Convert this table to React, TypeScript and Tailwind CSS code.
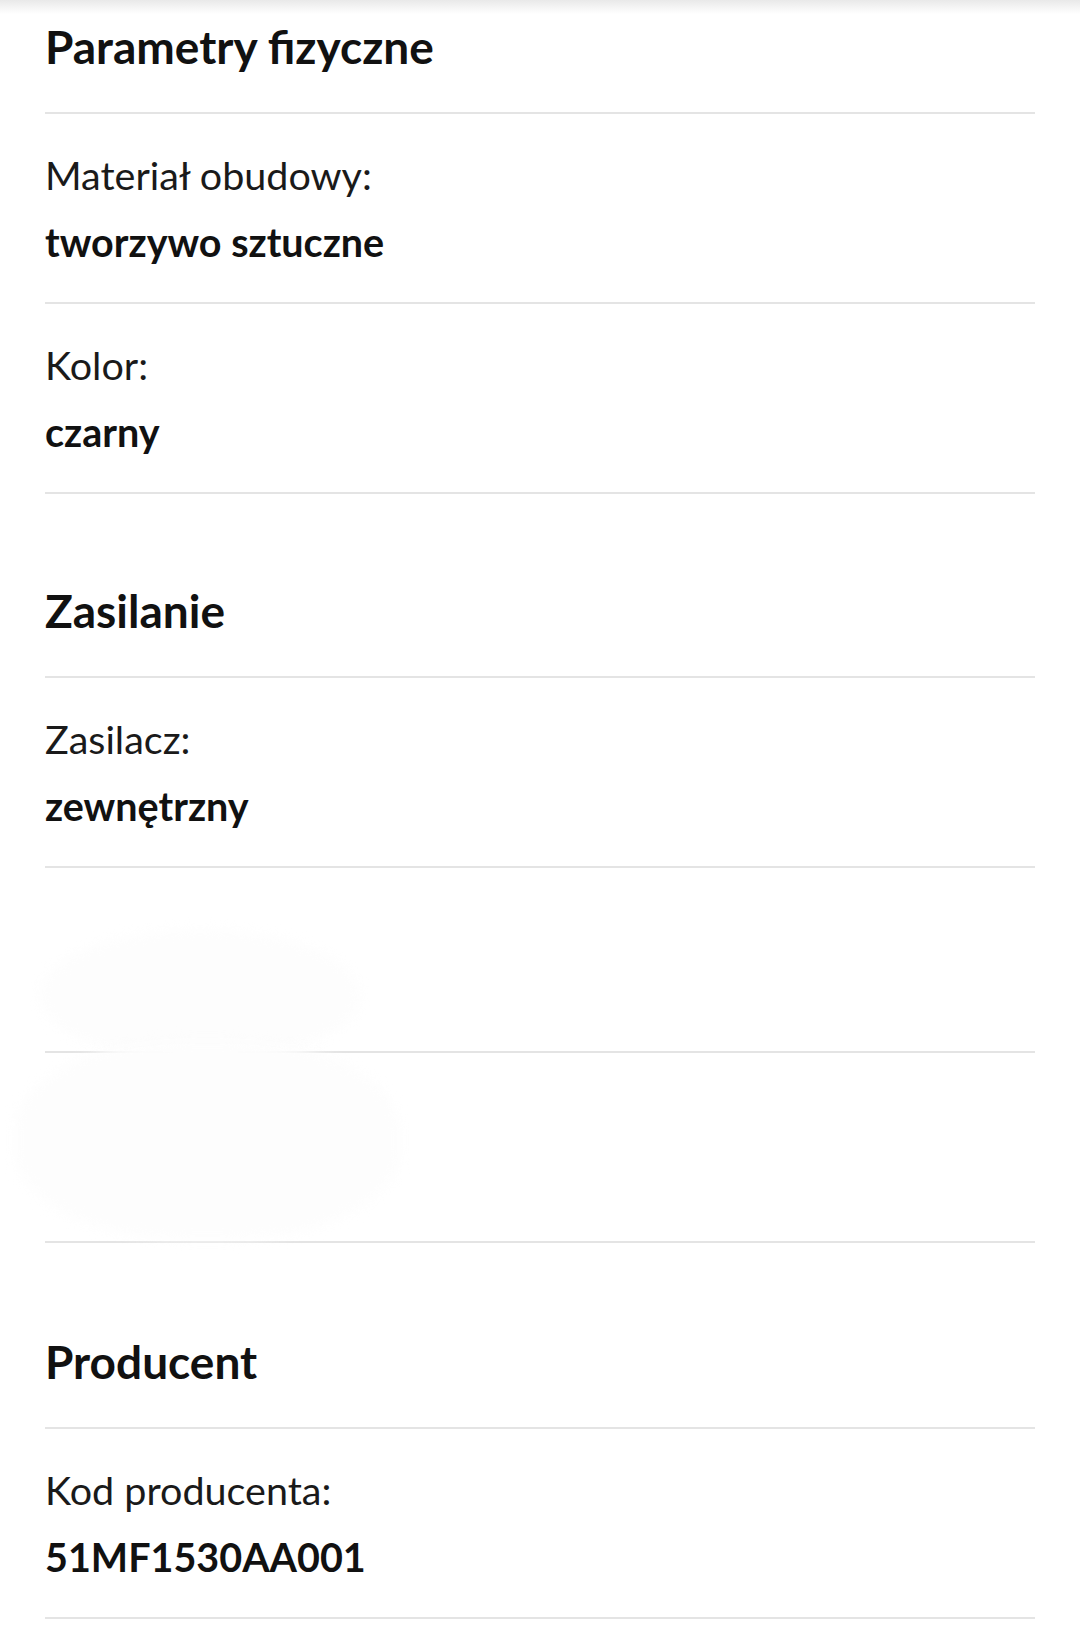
import React from "react";

interface Param {
  label: string;
  value: string;
}

function SectionTitle({ title, first }: { title: string; first?: boolean }) {
  return (
    <div
      className={`${first ? "pt-[20px]" : "pt-[90px]"} pb-[39px] border-b-2 border-[#e4e4e4]`}
    >
      <h2 className="text-[46px] leading-[53px] font-bold text-[#111]">{title}</h2>
    </div>
  );
}

function ParamRow({ label, value }: Param) {
  return (
    <div className="py-[27px] border-b-2 border-[#e4e4e4]">
      <div className="text-[39.5px] leading-[67px] text-[#1a1a1a]">{label}</div>
      <div className="text-[39.5px] leading-[67px] font-bold text-[#111]">{value}</div>
    </div>
  );
}

function App() {
  return (
    <div
      className="relative w-full min-h-screen bg-white overflow-hidden"
      style={{ fontFamily: "Lato, 'Noto Sans', sans-serif" }}
    >
      <div className="absolute top-0 left-0 right-0 h-[14px] bg-linear-to-b from-[#e9e9e9] to-white" />
      <div className="relative px-[45px]">
        <SectionTitle title="Parametry fizyczne" first />
        <ParamRow label="Materiał obudowy:" value="tworzywo sztuczne" />
        <ParamRow label="Kolor:" value="czarny" />

        <SectionTitle title="Zasilanie" />
        <ParamRow label="Zasilacz:" value="zewnętrzny" />

        {/* hidden rows */}
        <div className="h-[185px] border-b-2 border-[#e4e4e4]" />
        <div className="h-[190px] border-b-2 border-[#e4e4e4]" />

        <div className="pt-[92px] pb-[39px] border-b-2 border-[#e4e4e4]">
          <h2 className="text-[46px] leading-[53px] font-bold text-[#111]">Producent</h2>
        </div>
        <ParamRow label="Kod producenta:" value="51MF1530AA001" />
      </div>

      {/* faint blurred smudge over the hidden rows */}
      <div className="absolute left-[40px] top-[930px] w-[320px] h-[130px] rounded-[50%] bg-[#fdfdfd]/90 blur-[6px]" />
      <div className="absolute left-[15px] top-[1040px] w-[385px] h-[200px] rounded-[45%] bg-[#fdfdfd]/90 blur-[6px]" />
    </div>
  );
}

export default App;
